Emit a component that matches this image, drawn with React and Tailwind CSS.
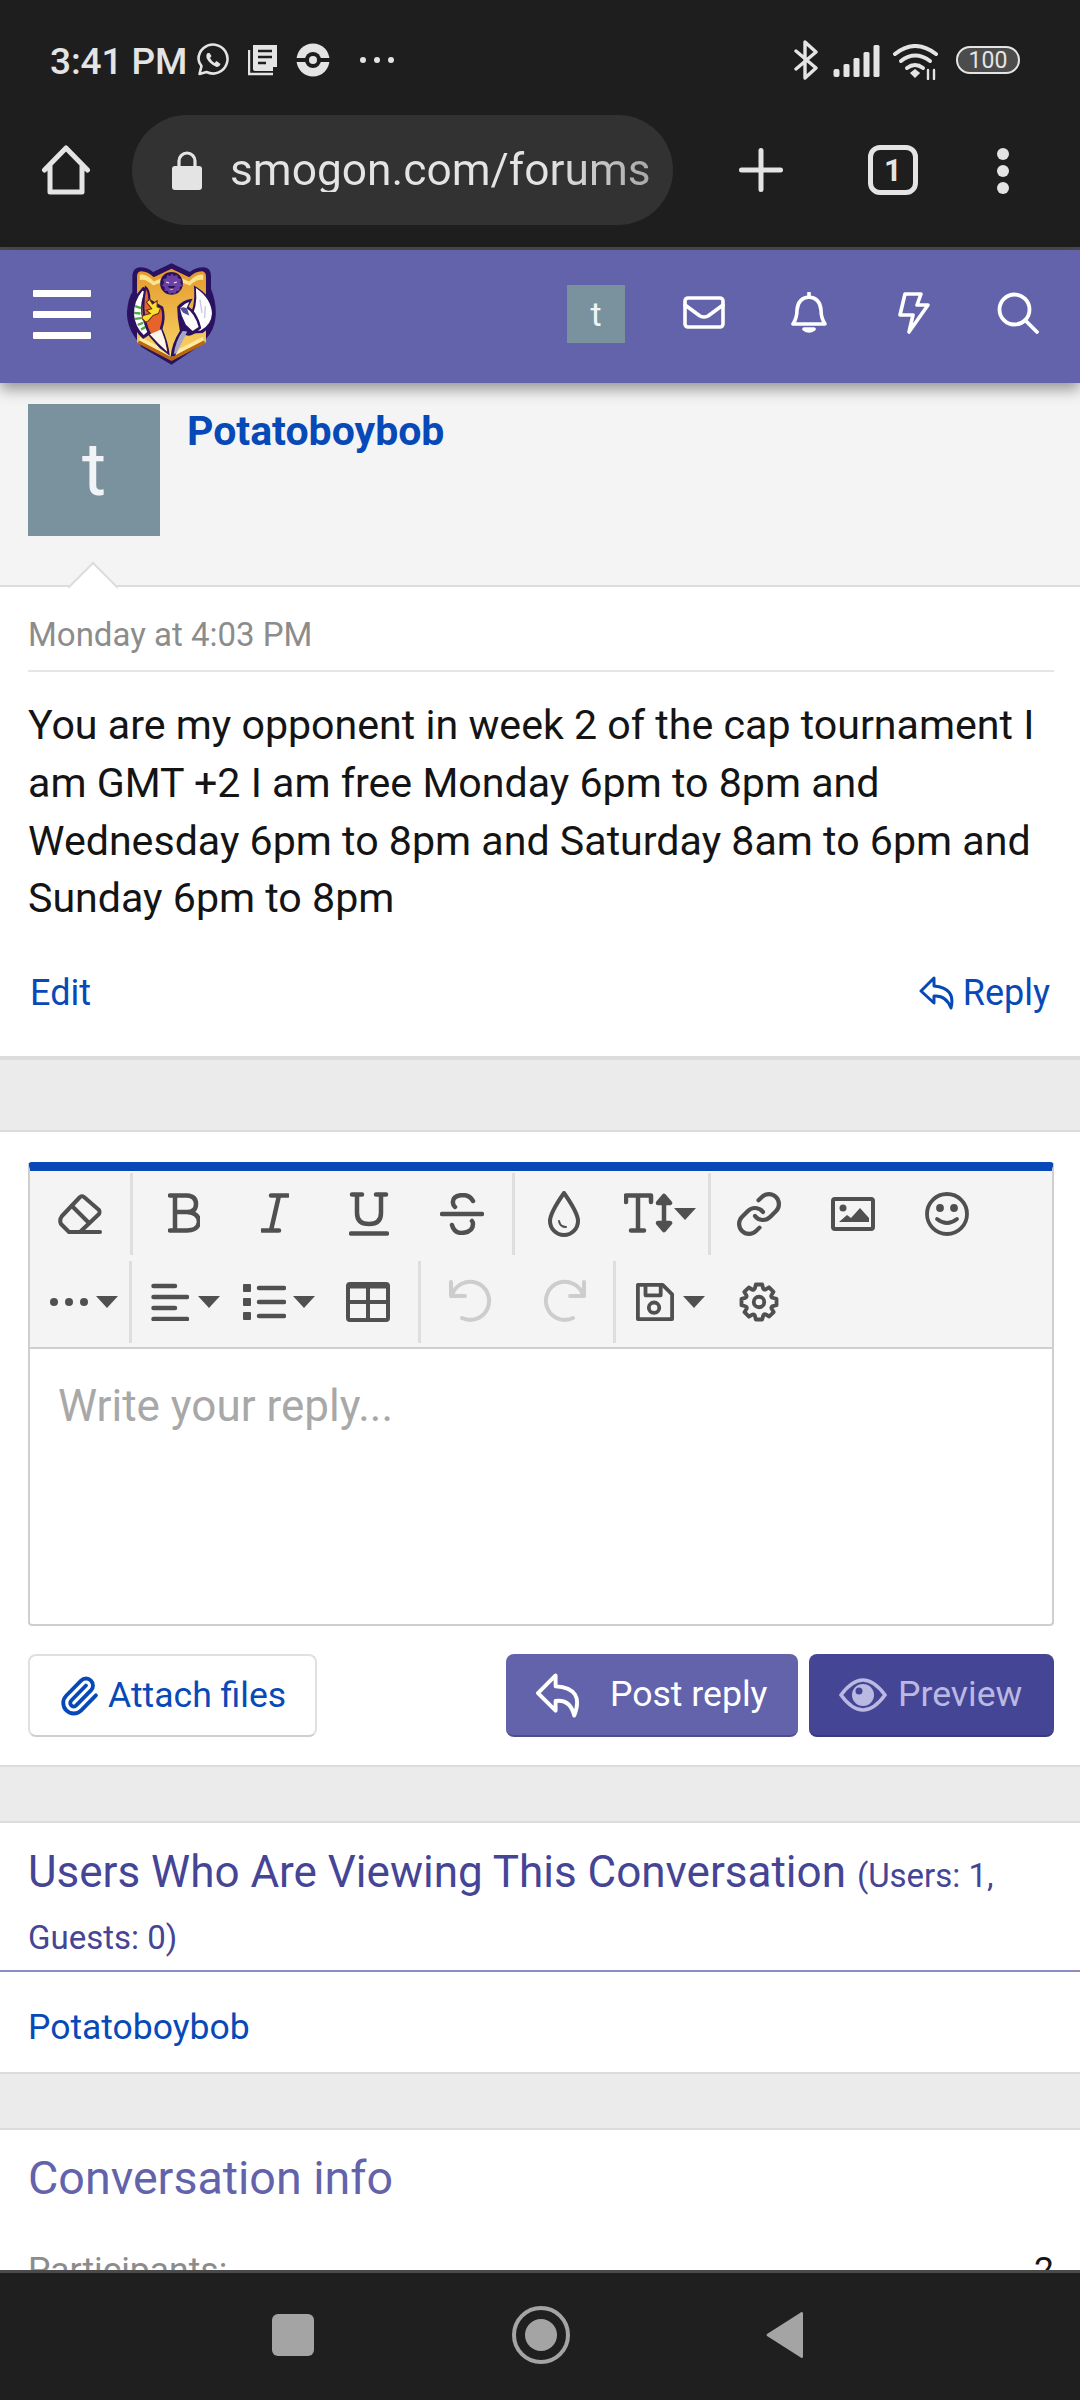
const Ic = ({ w, h, vb, className = "", children, sw = 4, stroke = "#505050" }) => (
  <svg width={w} height={h} viewBox={vb || `0 0 ${w} ${h}`} className={`shrink-0 ${className}`} fill="none" stroke={stroke} strokeWidth={sw} strokeLinecap="round" strokeLinejoin="round">{children}</svg>
);
const Sep = ({ className = "" }) => <div className={`w-[3px] h-[82px] bg-[#dedede] shrink-0 ${className}`} />;
const Caret = ({ className = "" }) => (
  <svg width="22" height="12" viewBox="0 0 22 12" className={`shrink-0 ${className}`}><path d="M0 0H22L11 12Z" fill="#505050" /></svg>
);

function Logo() {
  return (
    <svg width="89" height="102" viewBox="82 42 266 303" className="ml-[36px] shrink-0 -mt-[5px]">
      <defs>
        <linearGradient id="g" x1="0" y1="0" x2="0" y2="1">
          <stop offset="0" stopColor="#e39a2c" />
          <stop offset="1" stopColor="#fbd568" />
        </linearGradient>
      </defs>
      <path d="M215 42 L270 68 Q285 54 312 54 Q332 56 333 78 L333 118 Q350 160 347 200 Q344 240 318 268 L300 288 L215 345 L125 292 L100 255 Q80 220 82 185 Q86 145 98 128 L98 78 Q100 56 120 54 Q145 54 160 68 Z" fill="#2a1260" />
      <path d="M215 58 L268 84 Q285 66 306 66 Q318 68 318 80 L318 278 L215 332 L112 278 L112 80 Q112 68 124 66 Q145 66 162 84 Z" fill="url(#g)" />
      <path d="M120 76 Q140 72 162 96 L215 74 L268 96 Q290 72 310 76 L310 92 Q290 88 270 108 L215 88 L160 108 Q140 88 120 92Z" fill="#fbe28c" />
      <path d="M118 272 L215 322 L312 272 L316 282 L215 334 L114 282Z" fill="#b9680f" />
      <path d="M122 262 L215 310 L308 262 L312 272 L215 322 L118 272Z" fill="#fdeaa0" />
      <path d="M130 112 Q92 150 94 195 Q98 240 130 268 L152 254 Q124 222 128 175 Q130 140 146 122Z" fill="#2a1260" />
      <path d="M128 124 Q102 155 103 195 Q106 232 132 256 L146 244 Q122 215 124 172 Q126 142 138 128Z" fill="#fff" />
      <path d="M106 170 L124 176 M103 190 L122 192 M106 208 L124 206 M114 226 L130 220 M124 240 L138 232" stroke="#4fa84a" strokeWidth="7" />
      <path d="M136 108 Q152 118 152 150 L190 172 Q200 205 188 238 Q205 275 210 318 L180 296 L150 262 Q128 225 128 175 Q128 135 136 108Z" fill="#2a1260" />
      <path d="M139 120 Q146 130 146 158 L184 178 Q192 205 180 236 Q196 270 203 304 L182 286 L156 256 Q136 222 134 175 Q134 145 139 120Z" fill="#e8632c" />
      <path d="M140 158 L150 150 L158 164 L172 154 L172 172 L182 176 L176 192 L160 198 L146 214 L138 218 L126 206 L130 198 L152 192 L140 182 L156 178Z" fill="#f9e02e" stroke="#6a2a12" strokeWidth="3" />
      <path d="M150 254 L184 240 Q198 272 202 306 L176 282Z" fill="#fff6ea" />
      <path d="M282 108 Q340 140 342 190 Q342 232 308 250 L278 252 L262 205 Q288 180 282 108Z" fill="#2a1260" />
      <path d="M288 116 Q334 148 336 192 Q334 226 302 243 L282 244 L270 208 Q294 178 288 116Z" fill="#fdfdfd" />
      <path d="M300 150 L306 190 M316 170 L314 205 M290 200 L300 232" stroke="#c8c8de" strokeWidth="4" />
      <path d="M232 172 Q250 150 278 148 L266 172 Q292 186 304 236 L284 252 Q272 262 256 256 Q240 280 226 318 L212 322 Q216 280 240 244 Q232 205 232 172Z" fill="#2a1260" />
      <path d="M240 176 Q258 160 268 158 L260 176 Q284 190 296 232 L278 244 L258 226 Q244 200 240 176Z" fill="#fbfbfb" />
      <path d="M240 176 Q254 170 262 178 L268 198 L250 190Z" fill="#5a4a9a" />
      <path d="M248 244 L262 246 Q246 280 230 310 L222 314 Q226 276 248 244Z" fill="#a6a6c6" />
      <circle cx="215" cy="102" r="34" fill="#2a1260" />
      <path d="M215 72 l7 8 10-3 2 10 10 3-3 10 6 8-8 6 1 10-10 1-4 9-9-4-9 4-4-9-10-1 1-10-8-6 6-8-3-10 10-3 2-10 10 3Z" fill="#6c3fa4" />
      <path d="M199 98 l9 3 M222 101 l9-3" stroke="#efe6f7" strokeWidth="3.5" />
      <path d="M203 110 Q215 128 227 110Z" fill="#2a1260" />
      <path d="M209 118 Q215 126 221 118Z" fill="#e8d060" />
    </svg>
  );
}

const Band = ({ h }) => <div className={`${h} bg-[#ebebeb] border-y-2 border-[#dcdcdc] shrink-0`} />;

export default function App() {
  return (
    <div className="w-[1080px] h-[2400px] flex flex-col overflow-hidden bg-white" style={{ fontFamily: "Roboto, sans-serif" }}>
      {/* status + browser */}
      <div className="h-[250px] shrink-0 bg-[#1e1e1e] border-b-[3px] border-[#4b4b4b] flex flex-col text-[#e4e4e4]">
        <div className="h-[115px] pt-[41px] pl-[50px] pr-[60px] flex items-start">
          <div className="w-[146px] h-[40px] flex items-center text-[37px] font-medium leading-none tracking-[-0.1px] whitespace-nowrap">3:41 PM</div>
          <svg width="34" height="34" viewBox="0 0 33 34" fill="none" className="mt-[2px] shrink-0">
            <path d="M3 31 L5 23 Q2 19 2 16 A14.5 14.5 0 1 1 10 29Z" stroke="#e4e4e4" strokeWidth="2.6" strokeLinejoin="round" />
            <path d="M11 10 Q9 12 10 15 Q13 21 20 24 Q23 24 24 21 L20 18 L18 20 Q15 18 13.5 15 L15 13 L13 10Z" fill="#e4e4e4" />
          </svg>
          <svg width="30" height="31" viewBox="0 0 30 31" fill="none" className="ml-[18px] mt-[4px] shrink-0">
            <path d="M5 0 H29 V22 H25 V26 H7 Q5 26 5 24Z" fill="#e4e4e4" />
            <path d="M1 5 V29 H25" stroke="#e4e4e4" strokeWidth="2.4" />
            <path d="M10 6 H24 M10 12 H24 M10 18 H18" stroke="#1e1e1e" strokeWidth="2.6" />
          </svg>
          <svg width="34" height="34" viewBox="0 0 34 34" className="ml-[18px] mt-[2px] shrink-0">
            <circle cx="17" cy="17" r="16.5" fill="#e4e4e4" />
            <rect x="0" y="15" width="34" height="4" fill="#1e1e1e" />
            <circle cx="17" cy="17" r="8" fill="#1e1e1e" />
            <circle cx="17" cy="17" r="4" fill="#e4e4e4" />
          </svg>
          <div className="flex gap-[8px] ml-[30px] mt-[16px]">
            <div className="w-[6px] h-[6px] rounded-full bg-[#e4e4e4]" />
            <div className="w-[6px] h-[6px] rounded-full bg-[#e4e4e4]" />
            <div className="w-[6px] h-[6px] rounded-full bg-[#e4e4e4]" />
          </div>
          <div className="flex-1" />
          <svg width="24" height="40" viewBox="0 0 24 40" fill="none" stroke="#e4e4e4" strokeWidth="3.4" strokeLinejoin="round" strokeLinecap="round" className="-mt-[1px] shrink-0">
            <path d="M2 11 L22 28 L11 38 V2 L22 12 L2 29" />
          </svg>
          <svg width="47" height="32" viewBox="0 0 46 32" className="ml-[15px] mt-[4px] shrink-0" fill="#e4e4e4">
            <rect x="0" y="24" width="6" height="8" rx="2" /><rect x="10" y="19" width="6" height="13" rx="1.5" /><rect x="20" y="13" width="6" height="19" rx="1.5" /><rect x="30" y="7" width="6" height="25" rx="1.5" /><rect x="40" y="0" width="6" height="32" rx="1.5" />
          </svg>
          <svg width="46" height="36" viewBox="0 0 46 36" className="ml-[13px] mt-[3px] shrink-0" fill="none" stroke="#e4e4e4" strokeWidth="4" strokeLinecap="round">
            <path d="M2 10 Q22 -6 43 10" /><path d="M8 17 Q22 6 37 17" /><path d="M14 24 Q22 18 30 24" />
            <path d="M18 29 L22 33 L26 29 L22 26Z" fill="#e4e4e4" strokeWidth="1.5" />
            <path d="M35 26 V35 M41 35 V26" strokeWidth="2.4" />
          </svg>
          <div className="ml-[17px] mt-[5px] w-[64px] h-[28px] rounded-full border-[2.5px] border-[#e4e4e4] bg-[#4c4c4c] flex items-center justify-center text-[23px] leading-none shrink-0">100</div>
        </div>
        <div className="h-[132px] pl-[41px] flex items-start">
          <svg width="50" height="50" viewBox="0 0 48 50" fill="none" stroke="#e4e4e4" strokeWidth="5" strokeLinejoin="round" strokeLinecap="round" className="mt-[30px] shrink-0">
            <path d="M2.5 25 L24 3 L45.5 25 M8 21 V47 H40 V21" />
          </svg>
          <div className="ml-[41px] w-[541px] h-[110px] rounded-full bg-[#323232] flex items-center pl-[40px] shrink-0">
            <svg width="30" height="39" viewBox="0 0 30 39" className="shrink-0">
              <path d="M7 16 V10 A8 8 0 0 1 23 10 V16" fill="none" stroke="#e4e4e4" strokeWidth="3.2" />
              <rect x="0" y="15" width="30" height="24" rx="3" fill="#e4e4e4" />
            </svg>
            <span className="ml-[28px] text-[44.3px] leading-none whitespace-nowrap bg-[linear-gradient(90deg,#e4e4e4_75%,#a8a8a8_100%)] bg-clip-text text-transparent">smogon.com/forums</span>
          </div>
          <svg width="44" height="44" viewBox="0 0 44 44" stroke="#e4e4e4" strokeWidth="5" strokeLinecap="round" className="ml-[66px] mt-[33px] shrink-0">
            <path d="M22 2.5 V41.5 M2.5 22 H41.5" />
          </svg>
          <div className="ml-[85px] mt-[30px] w-[50px] h-[50px] rounded-[12px] border-[5px] border-[#e4e4e4] flex items-center justify-center text-[31px] font-bold leading-none shrink-0">1</div>
          <div className="ml-[79px] mt-[33px] flex flex-col gap-[5px]">
            <div className="w-[12px] h-[12px] rounded-full bg-[#e4e4e4]" />
            <div className="w-[12px] h-[12px] rounded-full bg-[#e4e4e4]" />
            <div className="w-[12px] h-[12px] rounded-full bg-[#e4e4e4]" />
          </div>
        </div>
      </div>

      {/* nav */}
      <div className="relative z-10 h-[133px] shrink-0 bg-[#6363ac] flex items-center shadow-[0_6px_14px_rgba(0,0,0,0.4)]">
        <div className="ml-[33px] w-[58px] flex flex-col gap-[14px] -mt-[5px]">
          <div className="h-[7px] rounded-[1px] bg-white" />
          <div className="h-[7px] rounded-[1px] bg-white" />
          <div className="h-[7px] rounded-[1px] bg-white" />
        </div>
        <Logo />
        <div className="flex-1" />
        <div className="w-[58px] h-[58px] bg-[#7a929e] flex items-center justify-center text-[#f0f4f6] text-[34px] leading-none mr-[58px] -mt-[5px]">t</div>
        <Ic w={42} h={33} stroke="#fff" sw={3.6} className="-mt-[8px]">
          <rect x="2" y="2" width="38" height="29" rx="3" /><path d="M2 9 L17 20 Q21 22 25 20 L40 9" />
        </Ic>
        <Ic w={36} h={42} stroke="#fff" sw={3.6} className="ml-[66px] -mt-[8px]">
          <path d="M18 5 Q7 6 6 18 Q6 26 2 32 H34 Q30 26 30 18 Q29 6 18 5Z" /><path d="M18 1 V4" /><path d="M13 37 Q18 41 23 37Z" fill="#fff" />
        </Ic>
        <Ic w={32} h={42} stroke="#fff" sw={3.6} className="ml-[71px] -mt-[8px]">
          <path d="M7 2 H23 L19 13 H30 L11 40 L15 23 H2Z" />
        </Ic>
        <Ic w={42} h={42} stroke="#fff" sw={3.8} className="ml-[67px] mr-[41px] -mt-[8px]">
          <circle cx="17.5" cy="17.5" r="15" /><path d="M28 28 L40 40" />
        </Ic>
      </div>

      {/* content */}
      <div className="flex-1 min-h-0 overflow-hidden flex flex-col">
        <div className="h-[204px] shrink-0 bg-[#f4f4f4] border-b-2 border-[#dcdcdc] relative flex items-start pl-[28px] pt-[21px]">
          <div className="w-[132px] h-[132px] bg-[#7a929e] flex items-center justify-center text-[#f0f4f6] text-[74px] leading-none">t</div>
          <a className="ml-[27px] mt-[4px] text-[41px] leading-[46px] font-bold text-[#0849b8]">Potatoboybob</a>
          <div className="absolute left-[75px] -bottom-[20px] w-[36px] h-[36px] rotate-45 bg-white border-l-2 border-t-2 border-[#dcdcdc]" />
        </div>
        <div className="relative h-[471px] shrink-0 pl-[28px] pr-[26px] border-b-2 border-[#dcdcdc] flex flex-col">
          <div className="h-[85px] shrink-0 border-b-2 border-[#e6e6e6] flex items-center pt-[12px] text-[#8c8c8c] text-[33px] leading-none">Monday at 4:03 PM</div>
          <p className="mt-[25px] text-[41.15px] leading-[57.8px] text-[#141414]">You are my opponent in week 2 of the cap tournament I am GMT +2 I am free Monday 6pm to 8pm and Wednesday 6pm to 8pm and Saturday 8am to 6pm and Sunday 6pm to 8pm</p>
          <div className="mt-[43px] flex items-center justify-between text-[36px] leading-[44px] text-[#0849b8] pl-[2px] pr-[4px]">
            <span>Edit</span>
            <span className="flex items-center gap-[6px]">
              <Ic w={38} h={34} stroke="#0849b8" sw={3}>
                <path d="M15 2 L2 15 L15 27 V20 Q27 19 32 32 Q37 12 15 10Z" />
              </Ic>
              Reply
            </span>
          </div>
        </div>
        <Band h="h-[74px]" />

        <div className="h-[633px] shrink-0 pl-[28px] pr-[26px] pt-[30px] flex flex-col">
          <div className="h-[464px] shrink-0 border-x-2 border-b-2 border-[#cfcfcf] rounded-[4px] border-t-[9px] border-t-[#0849b8] flex flex-col">
            <div className="h-[178px] shrink-0 bg-[#f4f4f4] border-b-2 border-[#cfcfcf]">
              <div className="h-[90px] flex items-start pt-[2px]">
                <Ic w={44} h={40} className="ml-[28px] mt-[21px]">
                  <path d="M4 22 L22 3 Q24 1.5 26 3 L41 16 Q42 18 41 20 L22 38 H11 L3 30 Q1 26 4 22Z" /><path d="M14 12 L31 29" /><path d="M20 38 H42" />
                </Ic>
                <Sep className="ml-[28px]" />
                <Ic w={32} h={40} sw={4.5} className="ml-[35px] mt-[20px]">
                  <path d="M2 2.5 H19 Q28 3 28 11 Q28 19 19 19 H7 M19 19 Q31 20 31 29 Q30 37.5 19 37.5 H2 M7 2.5 V37.5" />
                </Ic>
                <Ic w={28} h={40} sw={4.5} className="ml-[61px] mt-[20px]">
                  <path d="M10 2.5 H27 M1 37.5 H18 M18 2.5 L10 37.5" />
                </Ic>
                <Ic w={40} h={44} sw={4.5} className="ml-[60px] mt-[19px]">
                  <path d="M3 2.5 H13 M27 2.5 H37 M8 2.5 V21 Q8 32 20 32 Q32 32 32 21 V2.5" /><path d="M2 41.5 H38" />
                </Ic>
                <Ic w={44} h={42} sw={4.5} className="ml-[51px] mt-[20px]">
                  <path d="M2 21 H42" /><path d="M33 8 Q30 2 22 2 Q12 3 13 10 Q13 12 15 14" /><path d="M12 32 Q14 40 22 40 Q33 39 33 31 Q33 29 32 28" />
                </Ic>
                <Sep className="ml-[28px]" />
                <Ic w={32} h={46} className="ml-[33px] mt-[18px]" sw={4}>
                  <path d="M16 2 Q30 22 30 30 A14 14 0 0 1 2 30 Q2 22 16 2Z" /><path d="M11 30 Q12 36 18 36" strokeWidth={2} />
                </Ic>
                <Ic w={50} h={40} sw={4.5} className="ml-[44px] mt-[20px]">
                  <path d="M2 9 V2.5 H27 V9 M14 2.5 V37.5 M7 37.5 H20" />
                  <path d="M40 4 V36" /><path d="M34 10 L40 3 L46 10Z M34 30 L40 37 L46 30Z" fill="#505050" />
                </Ic>
                <Caret className="mt-[35px]" />
                <Sep className="ml-[12px]" />
                <svg width="48" height="48" viewBox="0 0 24 24" fill="none" stroke="#505050" strokeWidth="2.1" strokeLinecap="round" strokeLinejoin="round" className="ml-[24px] mt-[17px] shrink-0">
                  <path d="M10 13a5 5 0 0 0 7.54.54l3-3a5 5 0 0 0-7.07-7.07l-1.72 1.71" /><path d="M14 11a5 5 0 0 0-7.54-.54l-3 3a5 5 0 0 0 7.07 7.07l1.71-1.71" />
                </svg>
                <svg width="44" height="34" viewBox="0 0 44 34" className="ml-[48px] mt-[24px] shrink-0">
                  <rect x="2" y="2" width="40" height="30" rx="2" fill="none" stroke="#505050" strokeWidth="4" />
                  <circle cx="12" cy="11" r="3.5" fill="#505050" /><path d="M8 25 L16 18 L20 21 L29 11 L38 21 V25Z" fill="#505050" />
                </svg>
                <Ic w={44} h={44} sw={3.8} className="ml-[50px] mt-[19px]">
                  <circle cx="22" cy="22" r="20" /><path d="M12 27 Q22 35 32 27" /><circle cx="15" cy="16" r="2" fill="#505050" /><circle cx="29" cy="16" r="2" fill="#505050" />
                </Ic>
              </div>
              <div className="h-[86px] flex items-start">
                <svg width="38" height="10" viewBox="0 0 38 10" fill="#505050" className="ml-[20px] mt-[36px] shrink-0"><circle cx="4" cy="5" r="4" /><circle cx="19" cy="5" r="4" /><circle cx="34" cy="5" r="4" /></svg>
                <Caret className="ml-[8px] mt-[35px]" />
                <Sep className="ml-[11px]" />
                <Ic w={38} h={38} sw={4.5} className="ml-[19px] mt-[22px]">
                  <path d="M2.5 3 H24 M2.5 14 H36 M2.5 25 H24 M2.5 36 H36" />
                </Ic>
                <Caret className="ml-[9px] mt-[35px]" />
                <Ic w={44} h={36} sw={4.5} className="ml-[22px] mt-[23px]">
                  <path d="M17 4 H42 M17 18 H42 M17 32 H42" /><rect x="2" y="1" width="6" height="6" fill="#505050" strokeWidth={2} /><rect x="2" y="15" width="6" height="6" fill="#505050" strokeWidth={2} /><rect x="2" y="29" width="6" height="6" fill="#505050" strokeWidth={2} />
                </Ic>
                <Caret className="ml-[7px] mt-[35px]" />
                <Ic w={44} h={40} sw={4} className="ml-[31px] mt-[21px]">
                  <rect x="2" y="2" width="40" height="36" rx="2" /><path d="M2 20 H42 M22 2 V38" /><path d="M2 4.5 H42" />
                </Ic>
                <Sep className="ml-[28px]" />
                <Ic w={44} h={44} sw={4} stroke="#cdcdcd" className="ml-[27px] mt-[18px]">
                  <path d="M3 3 V17 H17" /><path d="M4 16 A19 19 0 1 1 14 39" />
                </Ic>
                <Ic w={44} h={44} sw={4} stroke="#cdcdcd" className="ml-[51px] mt-[18px]">
                  <path d="M41 3 V17 H27" /><path d="M40 16 A19 19 0 1 0 30 39" />
                </Ic>
                <Sep className="ml-[26px]" />
                <Ic w={38} h={40} vb="0 0 40 40" sw={4} className="ml-[20px] mt-[21px]">
                  <path d="M2 2 H28 L38 12 V38 H2Z" /><path d="M10 2 V13 H26 V2" /><circle cx="19" cy="26" r="5.5" />
                </Ic>
                <Caret className="ml-[9px] mt-[35px]" />
                <svg width="42" height="44" viewBox="0 0 24 24" fill="none" stroke="#505050" strokeWidth="2.2" strokeLinecap="round" strokeLinejoin="round" className="ml-[33px] mt-[19px] shrink-0">
                  <path d="M9.67 4.14 10.2 2h3.6l.53 2.14a1 1 0 0 0 1.5.62l1.9-1.14 2.55 2.55-1.14 1.9a1 1 0 0 0 .62 1.5L22 10.2v3.6l-2.14.53a1 1 0 0 0-.62 1.5l1.14 1.9-2.55 2.55-1.9-1.14a1 1 0 0 0-1.5.62L13.8 22h-3.6l-.53-2.14a1 1 0 0 0-1.5-.62l-1.9 1.14-2.55-2.55 1.14-1.9a1 1 0 0 0-.62-1.5L2 13.8v-3.6l2.14-.53a1 1 0 0 0 .62-1.5l-1.14-1.9 2.55-2.55 1.9 1.14a1 1 0 0 0 1.5-.62Z" />
                  <circle cx="12" cy="12" r="3" />
                </svg>
              </div>
            </div>
            <div className="flex-1 pl-[28px] pt-[33px] text-[44px] leading-[48px] text-[#a8a8a8]">Write your reply...</div>
          </div>
          <div className="mt-[28px] flex items-stretch h-[83px]">
            <div className="w-[289px] rounded-[8px] border-2 border-[#e0e0e0] border-b-[#cfcfcf] flex items-center pl-[28px] text-[35.6px] text-[#0849b8]">
              <svg width="42" height="46" viewBox="0 0 24 24" fill="none" stroke="#0849b8" strokeWidth="2.2" strokeLinecap="round" strokeLinejoin="round" className="shrink-0">
                <path d="m16 6-8.414 8.586a2 2 0 0 0 2.829 2.829l8.414-8.586a4 4 0 1 0-5.657-5.657l-8.379 8.551a6 6 0 1 0 8.485 8.485l8.379-8.551" />
              </svg>
              <span className="ml-[8px] whitespace-nowrap">Attach files</span>
            </div>
            <div className="flex-1" />
            <div className="w-[292px] rounded-[8px] bg-[#6363ac] border-b-2 border-[#4f4f90] flex items-center pl-[30px] text-[35.6px] text-white">
              <Ic w={49} h={46} vb="0 0 50 46" stroke="#fff" sw={4}>
                <path d="M20 3 L2 21 L20 39 V29 Q35 27 39 44 Q50 16 20 14Z" />
              </Ic>
              <span className="ml-[25px] whitespace-nowrap">Post reply</span>
            </div>
            <div className="ml-[11px] w-[245px] rounded-[8px] bg-[#454596] border-b-2 border-[#3a3a80] flex items-center pl-[30px] text-[35.6px] text-[#b9b9e2]">
              <svg width="48" height="34" viewBox="0 0 48 34" className="shrink-0">
                <path d="M2 17 Q24 -13 46 17 Q24 47 2 17Z" fill="none" stroke="#b9b9e2" strokeWidth="3.6" />
                <circle cx="24" cy="17" r="11" fill="#b9b9e2" /><circle cx="20" cy="13" r="3.5" fill="#454596" />
              </svg>
              <span className="ml-[11px]">Preview</span>
            </div>
          </div>
        </div>
        <Band h="h-[58px]" />
        <div className="h-[149px] shrink-0 border-b-2 border-[#8d8dc4] pl-[28px] pr-[26px] pt-[18px] text-[#454596] text-[33px] leading-[62px]">
          <span className="text-[44px]">Users Who Are Viewing This Conversation </span>
          <span>(Users: 1, Guests: 0)</span>
        </div>
        <div className="h-[100px] shrink-0 px-[28px] pt-[33px] text-[35.5px] leading-[44px] text-[#0849b8]">Potatoboybob</div>
        <Band h="h-[58px]" />
        <div className="px-[28px] pt-[18px] text-[46.6px] leading-[60px] text-[#6363ac]">Conversation info</div>
        <div className="pl-[28px] pr-[26px] pt-[42px] flex justify-between text-[35.5px] leading-[40px] text-[#8c8c8c]">
          <span>Participants:</span><span className="text-[#141414]">2</span>
        </div>
      </div>

      {/* bottom nav */}
      <div className="relative z-10 h-[130px] shrink-0 bg-[#1f1f1f] border-t-[3px] border-[#4b4b4b]">
        <div className="flex items-start">
          <div className="ml-[272px] mt-[41px] w-[42px] h-[42px] rounded-[6px] bg-[#a4a4a4]" />
          <div className="ml-[198px] mt-[33px] w-[58px] h-[58px] rounded-full border-[4px] border-[#a4a4a4] flex items-center justify-center">
            <div className="w-[32px] h-[32px] rounded-full bg-[#a4a4a4]" />
          </div>
          <svg width="38" height="48" viewBox="0 0 38 48" className="ml-[196px] mt-[38px]">
            <path d="M37 2 V46 Q36 48 34 46 L1 25 Q0 24 1 23 L34 2 Q36 0 37 2Z" fill="#a4a4a4" />
          </svg>
        </div>
      </div>
    </div>
  );
}
